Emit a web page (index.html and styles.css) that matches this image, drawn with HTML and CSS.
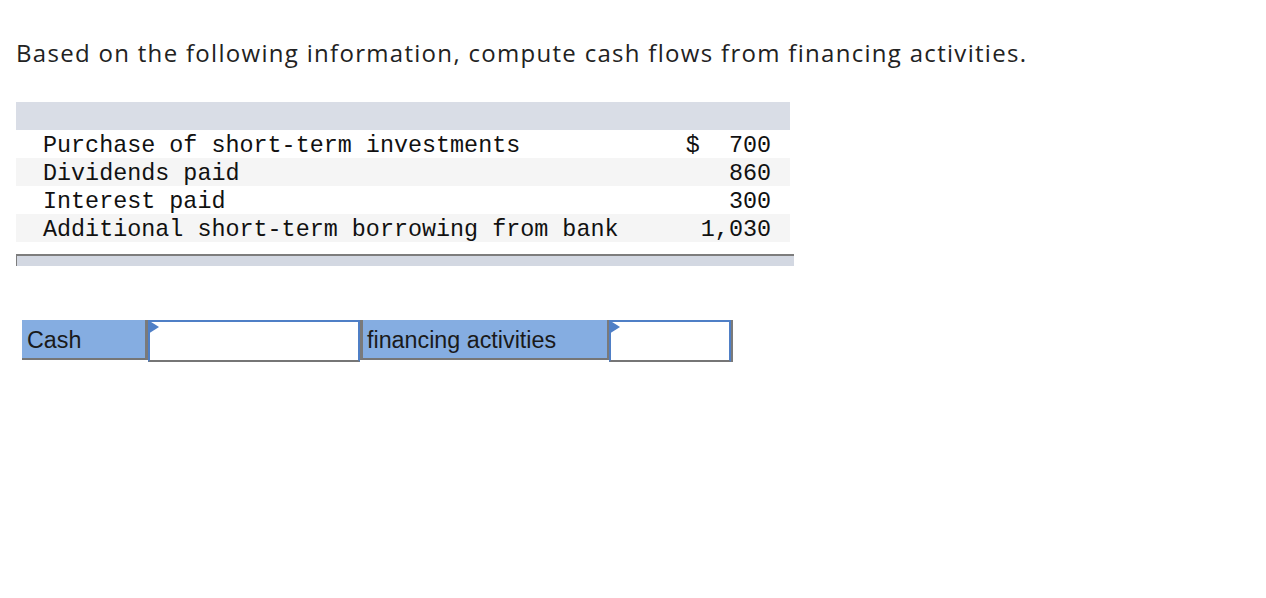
FILE: index.html
```html
<!DOCTYPE html>
<html>
<head>
<meta charset="utf-8">
<link rel="stylesheet" href="styles.css">
</head>
<body>
<p class="question">Based on the following information, compute cash flows from financing activities.</p>
<table class="data">
  <tr class="head"><td></td><td></td><td></td></tr>
  <tr><td class="lbl">Purchase of short-term investments</td><td class="cur">$</td><td class="num">700</td></tr>
  <tr class="alt"><td class="lbl">Dividends paid</td><td class="cur"></td><td class="num">860</td></tr>
  <tr><td class="lbl">Interest paid</td><td class="cur"></td><td class="num">300</td></tr>
  <tr class="alt"><td class="lbl">Additional short-term borrowing from bank</td><td class="cur"></td><td class="num">1,030</td></tr>
</table>
<div class="foot"></div>
<div class="form-row">
  <div class="cell label first">Cash</div>
  <div class="cell input wide"><span class="flag"></span></div>
  <div class="cell label second">financing activities</div>
  <div class="cell input narrow"><span class="flag"></span></div>
</div>
</body>
</html>
```
FILE: styles.css
```css
body {
  margin: 0;
  background: #fff;
}
.question {
  margin: 36px 0 0 16px;
  font-family: "Open Sans", sans-serif;
  font-size: 24px;
  line-height: 34px;
  color: #222;
  letter-spacing: 1.3px;
}
.data {
  margin: 32px 0 0 16px;
  width: 774px;
  border-collapse: collapse;
  font-family: "Liberation Mono", monospace;
  font-size: 23.4px;
  color: #111;
}
.data td {
  height: 24px;
  padding: 4px 0 0 0;
  line-height: 24px;
  white-space: pre;
}
.data .head td {
  background: #d9dde6;
}
.data .alt td {
  background: #f5f5f5;
}
.data .lbl {
  padding-left: 27px;
}
.data .cur {
  width: 15px;
  text-align: left;
}
.data .num {
  width: 70px;
  text-align: right;
  padding-right: 19px;
}
.foot {
  margin: 12px 0 0 16px;
  width: 777px;
  height: 10px;
  background: #d3d8e2;
  border-top: 2px solid #7d7d7d;
  border-left: 1px solid #7d7d7d;
}
.form-row {
  display: flex;
  margin: 54px 0 0 22px;
  font-family: "Liberation Sans", Arial, sans-serif;
  font-size: 23.3px;
  color: #1a1a1a;
}
.cell {
  height: 40px;
  border-bottom: 2px solid #767676;
  box-sizing: content-box;
}
.label {
  background: #85ade1;
  line-height: 40px;
  padding-left: 5px;
  box-sizing: border-box;
}
.first {
  width: 126px;
  border-right: 3px solid #7a7a7a;
}
.second {
  width: 249px;
  border-left: 3px solid #7a7a7a;
  border-right: 2px solid #7a7a7a;
  padding-left: 4px;
}
.input {
  position: relative;
  background: #fff;
  border-top: 2px solid #4f7fc6;
  border-left: 2px solid #4f7fc6;
  height: 38px;
}
.wide {
  width: 208px;
  border-right: 2px solid #4f7fc6;
}
.narrow {
  width: 118px;
  border-right: 2px solid #4f7fc6;
  box-shadow: 2px 0 0 #7a7a7a;
}
.flag {
  position: absolute;
  left: -2px;
  top: -2px;
  width: 0;
  height: 0;
  border-top: 7px solid transparent;
  border-bottom: 7px solid transparent;
  border-left: 11px solid #4f7fc6;
}
```
